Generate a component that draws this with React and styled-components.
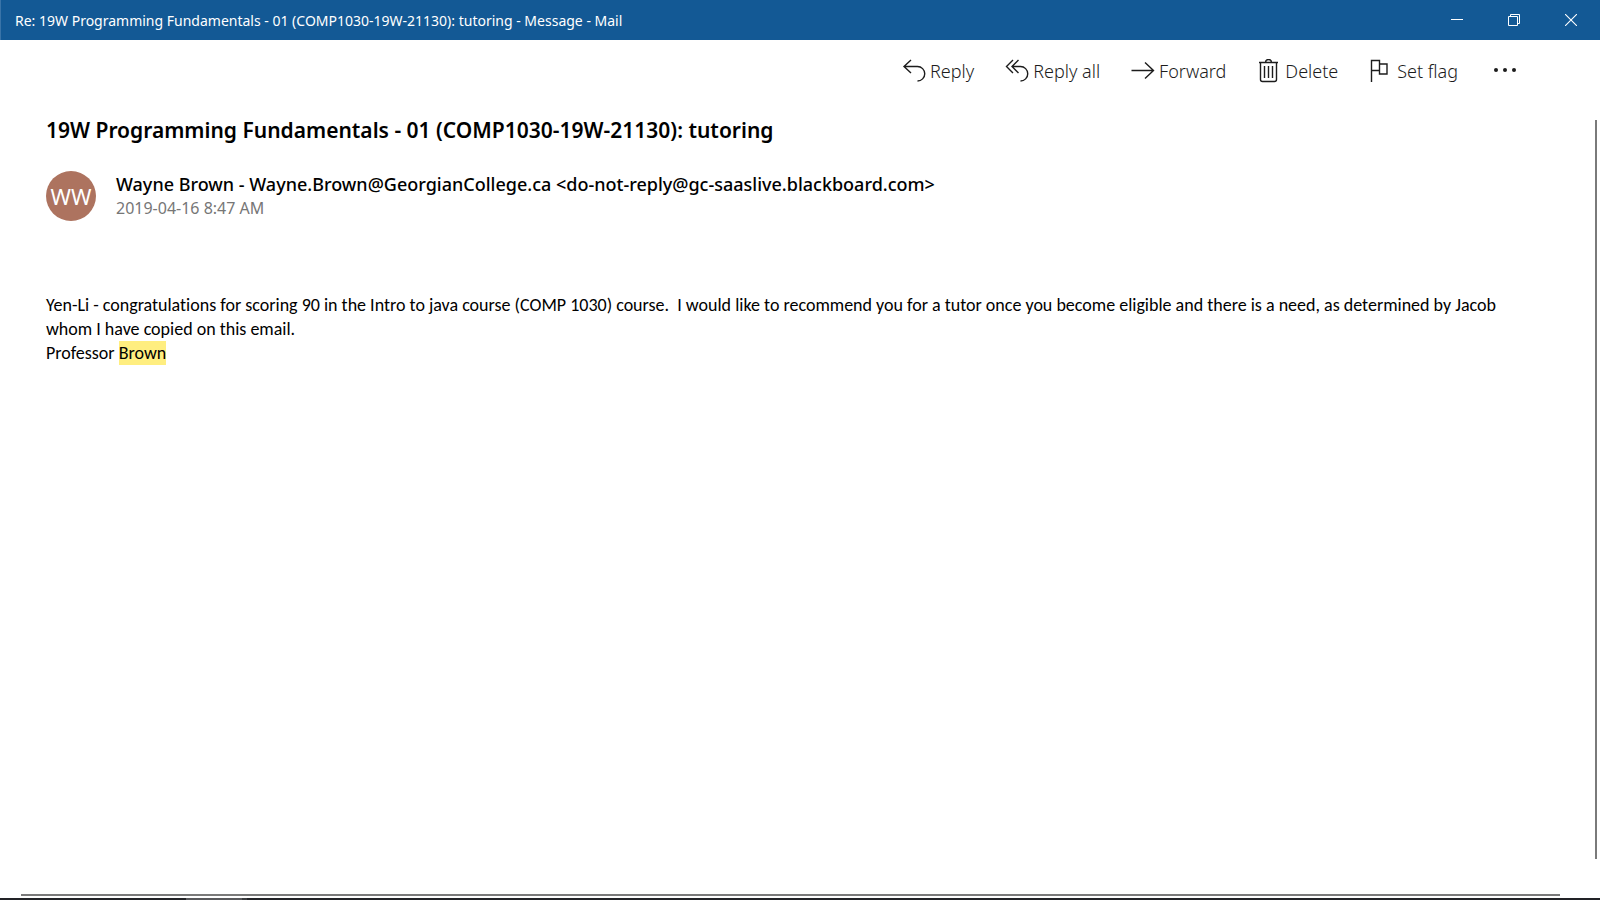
import React from "react";
import styled, { createGlobalStyle } from "styled-components";

const uiFont = '"Segoe UI", "Noto Sans", "Open Sans", sans-serif';
const bodyFont = 'Calibri, "Open Sans", "Noto Sans", sans-serif';

const GlobalStyle = createGlobalStyle`
  *, *::before, *::after { box-sizing: border-box; }
  body { margin: 0; background: #fff; color: #000; font-family: ${uiFont}; }
  h1, h2, p { margin: 0; }
`;

const Window = styled.div`
  min-height: 100vh;
  display: flex;
  flex-direction: column;
  background: #fff;
`;

const TitleBar = styled.header`
  height: 40px;
  display: flex;
  align-items: center;
  justify-content: space-between;
  padding: 0 1px 0 14px;
  border-left: 1px solid #3a74a8;
  background: #135995;
`;

const WindowTitle = styled.span`
  padding-top: 2px;
  color: #fff;
  font-size: 14px;
  line-height: 20px;
  white-space: nowrap;
`;

const WindowControls = styled.div`
  display: flex;
  align-self: stretch;
`;

const ControlButton = styled.button`
  width: 57px;
  padding: 0;
  border: 0;
  display: flex;
  align-items: center;
  justify-content: center;
  background: transparent;
  color: #fff;
`;

const Toolbar = styled.nav`
  height: 62px;
  display: flex;
  align-items: center;
  justify-content: flex-end;
  gap: 31px;
  padding-right: 82px;
`;

const Command = styled.button`
  height: 40px;
  padding: 0;
  border: 0;
  display: flex;
  align-items: center;
  gap: 4px;
  background: transparent;
  color: #1c1c1c;
  font-family: ${uiFont};
  font-size: 18px;
  font-weight: 300;
  line-height: 24px;
  white-space: nowrap;
`;

const Icon = styled.svg`
  display: block;
  flex: none;
  fill: none;
  stroke: currentColor;
  stroke-width: ${(p) => p.$stroke || 1.4};
`;

const Pane = styled.main`
  flex: 1;
  display: flex;
  padding-right: 3px;
`;

const Message = styled.article`
  flex: 1;
  min-width: 0;
  padding: 12px 58px 0 46px;
`;

const Subject = styled.h1`
  font-size: 21px;
  font-weight: 600;
  line-height: 32px;
`;

const SenderRow = styled.div`
  display: flex;
  gap: 20px;
  padding-top: 25px;
`;

const Avatar = styled.div`
  width: 50px;
  height: 50px;
  flex: none;
  display: flex;
  align-items: center;
  justify-content: center;
  border-radius: 50%;
  background: #ad735f;
  color: #fff;
  font-size: 22px;
`;

const SenderName = styled.h2`
  font-size: 18px;
  font-weight: 500;
  line-height: 26px;
`;

const SentDate = styled.time`
  display: block;
  color: #767676;
  font-size: 16px;
  line-height: 22px;
`;

const Body = styled.div`
  padding-top: 72px;
  font-family: ${bodyFont};
  font-size: 18px;
  font-variant-ligatures: none;
  line-height: 24px;
`;

const Paragraph = styled.p`
  white-space: pre-wrap;
`;

const Highlight = styled.mark`
  display: inline-block;
  background: #ffee80;
  color: inherit;
`;

const VerticalThumb = styled.div`
  width: 2px;
  margin-top: 18px;
  background: #7a7a7a;
`;

const HorizontalThumb = styled.div`
  height: 2px;
  margin: 35px 40px 2px 21px;
  background: #7a7a7a;
`;

const Taskbar = styled.footer`
  height: 2px;
  display: flex;
  padding-left: 186px;
  background: #222327;
`;

const TaskbarItem = styled.div`
  width: ${(p) => p.$width};
  background: ${(p) => p.$color};
`;

export default function App() {
  return (
    <>
      <GlobalStyle />
      <Window>
        <TitleBar>
          <WindowTitle>
            Re: 19W Programming Fundamentals - 01 (COMP1030-19W-21130): tutoring - Message - Mail
          </WindowTitle>
          <WindowControls>
            <ControlButton aria-label="Minimize">
              <Icon width="12" height="12" viewBox="0 0 12 12" $stroke={1}>
                <path d="M0 5.5h12" />
              </Icon>
            </ControlButton>
            <ControlButton aria-label="Restore">
              <Icon width="12" height="12" viewBox="0 0 12 12" $stroke={1}>
                <path d="M.5 2.5h9v9h-9zM2.5 2.5v-2h9v9h-2" />
              </Icon>
            </ControlButton>
            <ControlButton aria-label="Close">
              <Icon width="12" height="12" viewBox="0 0 12 12" $stroke={1.1}>
                <path d="M0 0l12 12M12 0L0 12" />
              </Icon>
            </ControlButton>
          </WindowControls>
        </TitleBar>

        <Toolbar>
          <Command>
            <Icon width="24" height="24" viewBox="0 0 24 24">
              <path d="M9 1L2 7.5l7 6.5M2 7.5h13.5a7 7 0 0 1 0 14.5" />
            </Icon>
            Reply
          </Command>
          <Command>
            <Icon width="24" height="24" viewBox="0 0 24 24">
              <path d="M8 1L1.5 7.5L8 14M13.5 1L7 7.5l6.5 6.5M7 7.5h8.500a7 7 0 0 1 0 14.5" />
            </Icon>
            Reply all
          </Command>
          <Command>
            <Icon width="24" height="24" viewBox="0 0 24 24">
              <path d="M.5 11.500h22M14 3.500l8.500 8l-8.500 8" />
            </Icon>
            Forward
          </Command>
          <Command>
            <Icon width="24" height="24" viewBox="0 0 24 24">
              <path d="M2 3.5h19M3.500 3.500v17q0 2 2 2h12q2 0 2-2v-17M8.500 3.500q0-3 3-3t3 3M7.500 7v12M11.500 7v12M15.500 7v12" />
            </Icon>
            Delete
          </Command>
          <Command>
            <Icon width="24" height="24" viewBox="0 0 24 24">
              <path d="M2.500 23V1.500h8v10h-8M10.500 5h7.500v10h-7.500v-4" />
            </Icon>
            Set flag
          </Command>
          <Command aria-label="More">
            <Icon width="29" height="24" viewBox="0 0 29 24">
              <g fill="currentColor" stroke="none">
                <circle cx="7" cy="11" r="2" />
                <circle cx="16" cy="11" r="2" />
                <circle cx="25" cy="11" r="2" />
              </g>
            </Icon>
          </Command>
        </Toolbar>

        <Pane>
          <Message>
            <Subject>19W Programming Fundamentals - 01 (COMP1030-19W-21130): tutoring</Subject>
            <SenderRow>
              <Avatar>WW</Avatar>
              <div>
                <SenderName>
                  Wayne Brown - Wayne.Brown@GeorgianCollege.ca &lt;do-not-reply@gc-saaslive.blackboard.com&gt;
                </SenderName>
                <SentDate dateTime="2019-04-16T08:47">2019-04-16 8:47 AM</SentDate>
              </div>
            </SenderRow>
            <Body>
              <Paragraph>
                {"Yen-Li - congratulations for scoring 90 in the Intro to java course (COMP 1030) course.  I would like to recommend you for a tutor once you become eligible and there is a need, as determined by Jacob whom I have copied on this email."}
              </Paragraph>
              <Paragraph>
                Professor <Highlight>Brown</Highlight>
              </Paragraph>
            </Body>
          </Message>
          <VerticalThumb />
        </Pane>

        <HorizontalThumb />
        <Taskbar>
          <TaskbarItem $width="56px" $color="#58595c" />
          <TaskbarItem $width="5px" $color="#3b3c3f" />
        </Taskbar>
      </Window>
    </>
  );
}
